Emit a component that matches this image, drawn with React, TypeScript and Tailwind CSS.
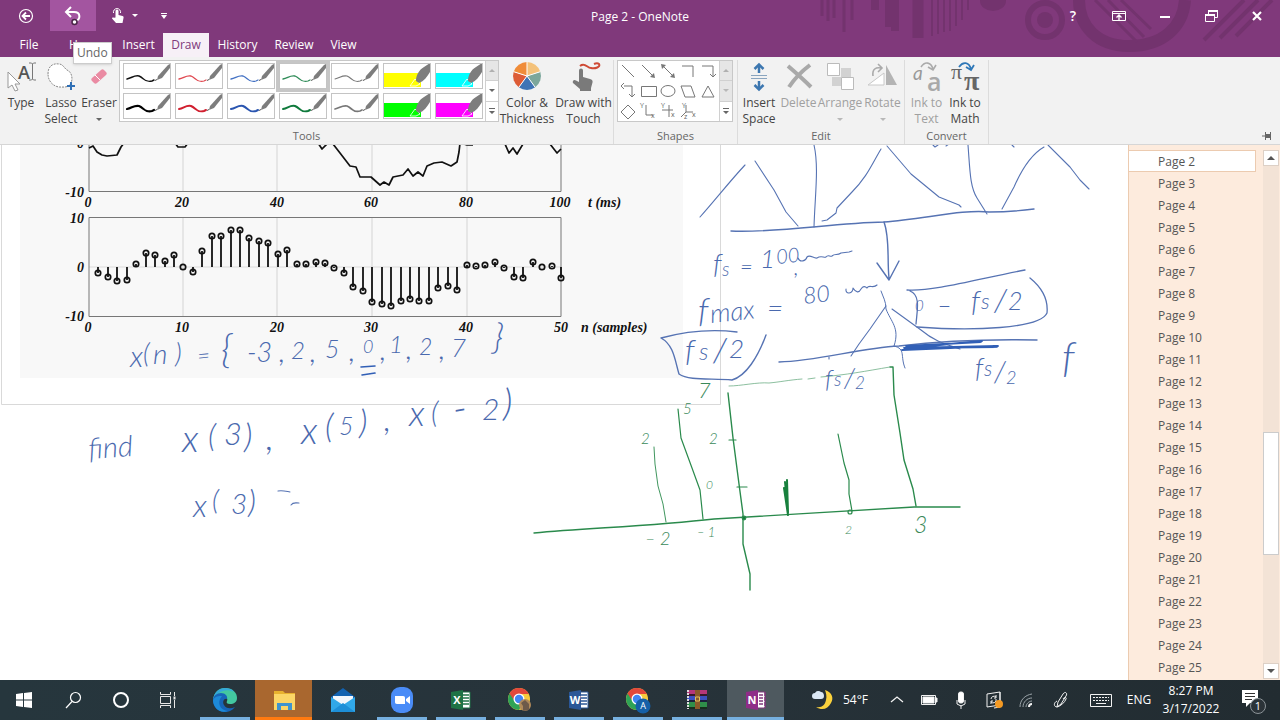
import { useState } from 'react'
import type { ReactNode } from 'react'

const TABS = [
  { name: 'File', width: 'w-[58px]' },
  { name: 'Home', width: 'w-14' },
  { name: 'Insert', width: 'w-[49px]' },
  { name: 'Draw', width: 'w-[46px]' },
  { name: 'History', width: 'w-[57px]' },
  { name: 'Review', width: 'w-14' },
  { name: 'View', width: 'w-[43px]' },
]

const PENS = [
  { color: '#111111', weight: 1.5 },
  { color: '#e0474f', weight: 1.3 },
  { color: '#4472c4', weight: 1.3 },
  { color: '#2e8b57', weight: 1.3 },
  { color: '#777777', weight: 1.1 },
  { color: '#ffff00', marker: true },
  { color: '#00ffff', marker: true },
  { color: '#000000', weight: 2.2 },
  { color: '#d11f2f', weight: 2 },
  { color: '#2a55b0', weight: 2 },
  { color: '#0f7a3c', weight: 2 },
  { color: '#777777', weight: 1.7 },
  { color: '#00ff00', marker: true },
  { color: '#ff00ff', marker: true },
]

const PAGES = Array.from({ length: 24 }, (_, i) => `Page ${i + 2}`)

// 采样点的纵坐标，n 从 1 开始
const SAMPLES = [
  273, 277, 281, 280, 264, 253, 255, 261, 255, 267, 272, 251, 236, 236, 230, 230, 238, 241, 243, 254, 250, 264, 264,
  262, 263, 268, 273, 287, 291, 302, 304, 306, 301, 299, 301, 301, 288, 286, 290, 265, 266, 265, 262, 268, 277, 278,
  262, 267, 266, 278,
]

interface InkText {
  t: string
  x: number
  y: number
  s: number
  r?: number
}

const BLUE_NOTES: InkText[] = [
  { t: 'x', x: 130, y: 367, s: 30 },
  { t: '(', x: 143, y: 363, s: 27 },
  { t: 'n', x: 153, y: 364, s: 28 },
  { t: ')', x: 175, y: 363, s: 27 },
  { t: '=', x: 198, y: 364, s: 22, r: -6 },
  { t: '{', x: 221, y: 363, s: 40 },
  { t: '-3', x: 247, y: 362, s: 27 },
  { t: ',', x: 279, y: 362, s: 30 },
  { t: '2', x: 291, y: 359, s: 24 },
  { t: ',', x: 310, y: 362, s: 30 },
  { t: '5', x: 325, y: 358, s: 25 },
  { t: ',', x: 349, y: 361, s: 30 },
  { t: '0', x: 363, y: 353, s: 18 },
  { t: ',', x: 380, y: 360, s: 30 },
  { t: '1', x: 389, y: 353, s: 24 },
  { t: ',', x: 406, y: 359, s: 30 },
  { t: '2', x: 419, y: 355, s: 23 },
  { t: ',', x: 439, y: 359, s: 30 },
  { t: '7', x: 451, y: 357, s: 26 },
  { t: '}', x: 492, y: 349, s: 36, r: 6 },
  { t: 'find', x: 89, y: 459, s: 29, r: -4 },
  { t: 'x', x: 182, y: 452, s: 38 },
  { t: '(', x: 208, y: 447, s: 32 },
  { t: '3', x: 224, y: 445, s: 31 },
  { t: ')', x: 244, y: 448, s: 34 },
  { t: ',', x: 266, y: 450, s: 38 },
  { t: 'x', x: 301, y: 444, s: 38 },
  { t: '(', x: 325, y: 438, s: 34 },
  { t: '5', x: 339, y: 435, s: 25 },
  { t: ')', x: 359, y: 434, s: 34 },
  { t: ',', x: 384, y: 431, s: 34 },
  { t: 'x', x: 409, y: 426, s: 36 },
  { t: '(', x: 431, y: 423, s: 30 },
  { t: '-', x: 455, y: 423, s: 40, r: -10 },
  { t: '2', x: 482, y: 420, s: 30 },
  { t: ')', x: 503, y: 416, s: 38 },
  { t: 'x', x: 193, y: 517, s: 32 },
  { t: '(', x: 212, y: 510, s: 28 },
  { t: '3', x: 231, y: 514, s: 28 },
  { t: ')', x: 248, y: 513, s: 32 },
  { t: 'f', x: 713, y: 274, s: 28 },
  { t: 's', x: 722, y: 276, s: 19 },
  { t: '=', x: 740, y: 274, s: 22 },
  { t: '1', x: 760, y: 268, s: 26 },
  { t: '00', x: 777, y: 264, s: 20, r: -6 },
  { t: ',', x: 794, y: 275, s: 22 },
  { t: 'f', x: 698, y: 322, s: 34 },
  { t: 'max', x: 711, y: 323, s: 26, r: -6 },
  { t: '=', x: 767, y: 318, s: 28 },
  { t: '80', x: 804, y: 304, s: 23, r: -6 },
  { t: 'f', x: 685, y: 362, s: 31 },
  { t: 's', x: 699, y: 360, s: 24 },
  { t: '/', x: 713, y: 362, s: 34 },
  { t: '2', x: 729, y: 358, s: 26 },
  { t: '0', x: 915, y: 311, s: 15 },
  { t: '–', x: 937, y: 314, s: 26 },
  { t: 'f', x: 971, y: 312, s: 29 },
  { t: 's', x: 981, y: 309, s: 22 },
  { t: '/', x: 994, y: 312, s: 32 },
  { t: '2', x: 1008, y: 310, s: 25 },
  { t: 'f', x: 825, y: 388, s: 25 },
  { t: 's', x: 834, y: 386, s: 19 },
  { t: '/', x: 844, y: 388, s: 27 },
  { t: '2', x: 855, y: 389, s: 17 },
  { t: 'f', x: 975, y: 378, s: 27 },
  { t: 's', x: 984, y: 376, s: 21 },
  { t: '/', x: 994, y: 382, s: 29 },
  { t: '2', x: 1006, y: 384, s: 18 },
  { t: 'f', x: 1062, y: 371, s: 41 },
]

const GREEN_NOTES: InkText[] = [
  { t: '7', x: 698, y: 398, s: 22 },
  { t: '5', x: 683, y: 414, s: 15 },
  { t: '2', x: 641, y: 444, s: 15 },
  { t: '2', x: 709, y: 444, s: 15 },
  { t: '0', x: 706, y: 489, s: 12 },
  { t: '– 2', x: 645, y: 545, s: 18 },
  { t: '– 1', x: 697, y: 537, s: 13 },
  { t: '2', x: 845, y: 534, s: 12 },
  { t: '3', x: 914, y: 533, s: 23 },
]

function Caret({ dim }: { dim?: boolean }) {
  return (
    <svg className="h-[3px] w-[6px]" viewBox="0 0 6 3">
      <path d="M0 0h6L3 3z" fill={dim ? '#b8b8b8' : '#666'} />
    </svg>
  )
}

interface BigButtonProps {
  width: string
  lines: string[]
  disabled?: boolean
  caret?: boolean
  children: ReactNode
}

function BigButton({ width, lines, disabled, caret, children }: BigButtonProps) {
  return (
    <button
      disabled={disabled}
      className={`${width} flex shrink-0 flex-col items-center whitespace-nowrap leading-4 ${disabled ? 'text-[#a0a0a0]' : 'text-[#444]'}`}
    >
      <svg className="mt-px mb-[2px] h-8 w-9 overflow-visible" viewBox="0 0 36 32" fill="none">
        {children}
      </svg>
      {lines.map(line => (
        <span key={line}>{line}</span>
      ))}
      {caret && (
        <span className="flex h-4 items-center">
          <Caret dim={disabled} />
        </span>
      )}
    </button>
  )
}

function Group({ name, children }: { name: string; children: ReactNode }) {
  return (
    <section className="flex shrink-0 flex-col border-r border-[#dcdcdc]">
      <div className="flex h-[68px]">{children}</div>
      <h2 className="text-center text-[11px] leading-4 text-[#666]">{name}</h2>
    </section>
  )
}

function GalleryScroll({ label, dim }: { label: string; dim?: boolean }) {
  return (
    <div className="flex w-[13px] flex-col divide-y divide-[#d0d0d0] border-l border-[#d0d0d0]">
      <button aria-label={`${label} up`} className="flex flex-1 items-center justify-center bg-[#e6e6e6]">
        <svg className="h-[3px] w-[6px]" viewBox="0 0 6 3">
          <path d="M3 0l3 3H0z" fill="#b0b0b0" />
        </svg>
      </button>
      <button aria-label={`${label} down`} className={`flex flex-1 items-center justify-center ${dim ? 'bg-[#e6e6e6]' : ''}`}>
        <Caret dim={dim} />
      </button>
      <button aria-label={`${label} more`} className="flex flex-1 items-center justify-center">
        <svg className="h-[6px] w-[6px]" viewBox="0 0 6 6">
          <path d="M0 0h6v1H0zM0 3h6L3 6z" fill="#666" />
        </svg>
      </button>
    </div>
  )
}

function PenCell({ color, weight, marker, selected, onClick, label }: {
  color: string
  weight?: number
  marker?: boolean
  selected: boolean
  onClick: () => void
  label: string
}) {
  return (
    <button
      aria-label={label}
      onClick={onClick}
      className={`h-[26px] w-12 border border-[#c4c4c4] bg-white ${selected ? 'outline-3 outline-[#c6c6c6]' : ''}`}
    >
      <svg className="h-6 w-[46px]" viewBox="0 0 46 24" fill="none">
        {marker ? (
          <>
            <path d="M0 9h37v14H0z" fill={color} />
            <path d="M26 22l5-7 5 5-4 2z" stroke="#fff" strokeOpacity="0.8" />
            <path d="M32 17c0-6 3-11 8-14l6-4v9c-3 5-6 9-11 11z" fill="#7d7d7d" />
          </>
        ) : (
          <>
            <path d="M3 15c5-1 7-4 12-3 5 2 6 7 13 5l2-1" stroke={color} strokeWidth={weight} strokeLinecap="round" />
            <path d="M33 16l1-4L44 1l2-1v4l-8 10z" fill="#7d7d7d" />
            <path d="M31 16.500l2-1" stroke="#555" />
          </>
        )}
      </svg>
    </button>
  )
}

function ShapeGrid() {
  return (
    <svg className="h-[60px] w-[101px] overflow-visible" viewBox="0 0 101 60" fill="none" stroke="#777">
      <path d="M4 4l12 12M24 4l12 12M44 4l12 12M64 5h11v11M84 5h11v11M6 25h8v11" />
      <path d="M37 17l-1-5-4 4zM43 3l1 5 4-4zM57 17l-1-5-4 4z" fill="#777" stroke="none" />
      <path d="M92 13l3 3 3-3M6 22l-3 3 3 3M11 33l3 3 3-3" />
      <path d="M23.500 25.500h15v10h-15z" />
      <ellipse cx="50" cy="30" rx="7" ry="5.500" />
      <path d="M63 25h10l4 11H67zM90 25l6 11H84zM10 44l7 7-7 7-7-7z" />
      <path d="M28 44v10h7M44 49h11M51 44v12M68 44v7h7M68 51l-5 5" />
      <g fill="#666" stroke="none" className="font-['Open_Sans',sans-serif] text-[7px]">
        <text x="22" y="47">Y</text>
        <text x="33" y="57">x</text>
        <text x="43" y="47">Y</text>
        <text x="53" y="56">x</text>
        <text x="64" y="47">Y</text>
        <text x="74" y="56">x</text>
        <text x="66" y="58">z</text>
      </g>
    </svg>
  )
}

function TitleArt() {
  return (
    <svg className="pointer-events-none absolute top-0 right-0 h-[57px] w-[480px]" viewBox="0 0 480 57" fill="none" stroke="#73336e">
      <path d="M22 0v16M28 0v21M34 0v18M44 0v32M52 0v20" strokeWidth="3" />
      <path d="M75 0v10M89 0v27M95 0v31" strokeWidth="8" />
      <path d="M118 0v38" strokeWidth="11" />
      <path d="M132 0v36M138 0v34M144 0v32M150 0v31M156 0v26M162 0v20M168 0v10" strokeWidth="2" />
      <ellipse cx="193" cy="1" rx="13" ry="10" fill="#73336e" stroke="none" />
      <circle cx="245" cy="20" r="17" strokeWidth="6" />
      <circle cx="245" cy="20" r="8" fill="#73336e" stroke="none" />
      <path d="M279 0c0 26 18 46 50 46 34 0 54-19 56-46" strokeWidth="12" />
      <path d="M295 0l42 42M308 0l36 37M321 0l30 29" strokeWidth="3" />
      <path d="M444 0l-40 40M458 0l-38 38M472 0l-36 36" strokeWidth="4" />
    </svg>
  )
}

function TitleBar() {
  return (
    <div className="relative grid h-[31px] grid-cols-[1fr_auto_1fr] items-center text-white">
      <div className="flex h-full items-center">
        <button aria-label="Back" className="flex h-full w-[50px] items-center justify-center pl-[2px]">
          <svg className="size-4" viewBox="0 0 16 16" fill="none" stroke="#fff" strokeWidth="1.200">
            <circle cx="8" cy="8" r="6.500" />
            <path d="M12 8H5M8 4.500L4.500 8 8 11.500" strokeWidth="1.800" />
          </svg>
        </button>
        <button aria-label="Undo" className="flex h-full w-[46px] items-center justify-center bg-[#a355a0]">
          <svg className="size-5" viewBox="0 0 20 20" fill="none">
            <path d="M3 6h8c7 0 7 8 1 9" stroke="#fff" strokeWidth="2" />
            <path d="M8 1L3 6l5 5" stroke="#fff" strokeWidth="2" />
            <circle cx="11.500" cy="16" r="2.500" fill="#fff" stroke="#4b2448" strokeWidth="1.500" />
          </svg>
        </button>
        <button aria-label="Touch mode" className="ml-3 flex h-full items-center gap-2 px-1">
          <svg className="h-4 w-3" viewBox="0 0 12 16">
            <path d="M3.500 9.500V3a1.500 1.500 0 013 0v4l4 1c1 .3 1.300 1 1 2l-1 5H4L0 10.500c0-1 1-1.500 2-.7z" fill="#fff" />
            <path d="M1.500 5a3.600 3.600 0 117 0" fill="none" stroke="#fff" />
          </svg>
          <svg className="h-[3px] w-[6px]" viewBox="0 0 6 3">
            <path d="M0 0h6L3 3z" fill="#fff" />
          </svg>
        </button>
        <button aria-label="Customize toolbar" className="ml-3 flex h-full w-5 items-center justify-center">
          <svg className="h-[6px] w-[6px]" viewBox="0 0 6 6">
            <path d="M0 0h6v1H0zM0 2h6L3 6z" fill="#fff" />
          </svg>
        </button>
      </div>
      <h1 className="pt-[3px] text-[12px]">Page 2 - OneNote</h1>
      <div className="flex h-full items-center justify-end">
        <button aria-label="Help" className="w-[46px] text-center text-[14px] font-semibold">?</button>
        <button aria-label="Ribbon display options" className="flex w-[46px] justify-center">
          <svg className="h-3 w-[14px]" viewBox="0 0 14 12" fill="none" stroke="#fff">
            <path d="M.5 1.500h13v9H.5zM.5 3.500h13" />
            <path d="M7 10V5M4.500 7.500L7 5l2.500 2.500" strokeWidth="1.300" />
          </svg>
        </button>
        <button aria-label="Minimize" className="flex w-[46px] justify-center">
          <span className="mt-[3px] h-[2px] w-[10px] bg-white" />
        </button>
        <button aria-label="Restore" className="flex w-[46px] justify-center">
          <svg className="h-3 w-[13px]" viewBox="0 0 13 12" fill="none" stroke="#fff">
            <path d="M.5 5.500h9v6h-9zM3.500 5V1.500h9v6H10" />
            <path d="M0 5h10M3 1h10" strokeWidth="2" />
          </svg>
        </button>
        <button aria-label="Close" className="flex w-[46px] justify-center">
          <svg className="size-[10px]" viewBox="0 0 10 10" stroke="#fff" strokeWidth="2.200">
            <path d="M1 1l8 8M9 1L1 9" />
          </svg>
        </button>
      </div>
    </div>
  )
}

function Ribbon() {
  const [pen, setPen] = useState(3)

  return (
    <div className="flex border-b border-[#d6d6d6] bg-[#f2f2f2] pt-[3px] text-[12px]">
      <Group name="Tools">
        <BigButton width="w-[42px]" lines={['Type']}>
          <text x="15" y="18" fill="#555" className="font-['Open_Sans',sans-serif] text-[18px] font-semibold">A</text>
          <path d="M26 2h2.500l1 1 1-1H33M29.500 3v15M26 19h2.500l1-1 1 1H33" stroke="#777" />
          <path d="M5 11v16l4-3 3 6 3-1-3-6h5z" fill="#fff" stroke="#999" />
        </BigButton>
        <BigButton width="w-[38px]" lines={['Lasso', 'Select']}>
          <path d="M5 13C5 5 10 2 16 3c4 0 5 4 8 6 5 2 6 9 4 13-2 5-8 4-12 4C9 25 5 19 5 13z" fill="#fff" stroke="#888" strokeDasharray="2 1" />
          <path d="M28 21v8M24 25h8" stroke="#2f6fb5" strokeWidth="2" />
        </BigButton>
        <BigButton width="w-[38px]" lines={['Eraser']} caret>
          <path d="M11 17L20 9c1-1 2-1 3 0l2 2c1 1 1 2 0 3l-9 8c-1 1-2 1-3 0l-2-2c-1-1-1-2 0-3z" fill="#ea8ba3" />
          <path d="M14 14l5 5" stroke="#fff" />
        </BigButton>
        <div className="ml-px flex h-[62px] border border-[#c8c8c8] bg-white">
          <div className="grid grid-cols-7 gap-x-1 gap-y-1 py-[2px] pr-[2px] pl-[3px]">
            {PENS.map((p, i) => (
              <PenCell key={i} {...p} label={`Pen ${i + 1}`} selected={pen === i} onClick={() => setPen(i)} />
            ))}
          </div>
          <GalleryScroll label="Pens" />
        </div>
        <BigButton width="w-14" lines={['Color &', 'Thickness']}>
          <path d="M18 15V1A14 14 0 0131.300 10.700z" fill="#f4c27a" />
          <path d="M18 15l13.300-4.300A14 14 0 0126.200 26.300z" fill="#7ca79b" />
          <path d="M18 15l8.200 11.300a14 14 0 01-16.400 0z" fill="#3f74b5" />
          <path d="M18 15L9.800 26.300A14 14 0 014.700 10.700z" fill="#dd5c36" />
          <path d="M18 15L4.700 10.700A14 14 0 0118 1z" fill="#f08c38" />
          <path d="M18 15V1M18 15l13.300-4.300M18 15l8.200 11.300M18 15L9.800 26.300M18 15L4.700 10.700" stroke="#fff" />
        </BigButton>
        <BigButton width="w-[57px]" lines={['Draw with', 'Touch']}>
          <path d="M14 5c5-4 7 2 11 2 4 1 10-1 8-4-1-1-3-1-5 0" stroke="#cf4a35" strokeWidth="2" />
          <path d="M13 21V9.500a2 2 0 014 0V16l7 2c2 .5 3 1.500 2.500 3.500L25 27v3H14v-2l-7-6c-1-2 1-4 3-2.500z" fill="#7a7a7a" />
        </BigButton>
        <div className="w-px" />
      </Group>

      <Group name="Shapes">
        <div className="mr-1 ml-[3px] flex h-[62px] border border-[#c8c8c8] bg-white">
          <ShapeGrid />
          <GalleryScroll label="Shapes" dim />
        </div>
      </Group>

      <Group name="Edit">
        <BigButton width="w-[42px]" lines={['Insert', 'Space']}>
          <path d="M10 14.500h16M10 17.500h16" stroke="#8aa5bf" />
          <path d="M18 12V4M18 20v8" stroke="#3d77b0" strokeWidth="2.500" />
          <path d="M13.500 8L18 3.500 22.500 8M13.500 24l4.500 4.500 4.500-4.500" stroke="#3d77b0" strokeWidth="2.500" />
        </BigButton>
        <BigButton width="w-[37px]" lines={['Delete']} disabled>
          <path d="M7 5c7 6 14 12 23 21M29 4C21 10 14 17 8 26" stroke="#a9a9a9" strokeWidth="4" />
        </BigButton>
        <BigButton width="w-[46px]" lines={['Arrange']} disabled caret>
          <path d="M19 7h10v9H19zM10 16h9v9h-9z" fill="#d2d2d2" />
          <path d="M5.500 2.500h12v12h-12zM19.500 16.500h12v12h-12z" fill="#fff" stroke="#bbb" />
        </BigButton>
        <BigButton width="w-[39px]" lines={['Rotate']} disabled caret>
          <path d="M19 12v12H3z" fill="#fff" stroke="#c8c8c8" />
          <path d="M21 4l11 20H21z" fill="#b4b4b4" />
          <path d="M8 15c-1-7 3-9 8-8M13 3l4 4-4 4" stroke="#aaa" strokeWidth="1.600" />
        </BigButton>
        <div className="w-[2px]" />
      </Group>

      <Group name="Convert">
        <BigButton width="w-[43px]" lines={['Ink to', 'Text']} disabled>
          <text x="4" y="19" fill="#999" className="font-['Lato',sans-serif] text-[19px] italic">a</text>
          <text x="18" y="30" fill="#a9a9a9" className="font-['Open_Sans',sans-serif] text-[25px] font-semibold">a</text>
          <path d="M12 6c4-6 10-5 12 2M19 6l5 3 3-5" stroke="#aaa" strokeWidth="1.600" />
        </BigButton>
        <BigButton width="w-[34px]" lines={['Ink to', 'Math']}>
          <text x="4" y="18" fill="#666" className="font-['Liberation_Serif',serif] text-[22px]">π</text>
          <text x="17" y="29" fill="#666" className="font-['Liberation_Serif',serif] text-[28px] font-bold">π</text>
          <path d="M12 6c4-6 10-5 12 2M19 6l5 3 3-5" stroke="#2f78b8" strokeWidth="1.800" />
        </BigButton>
        <div className="w-[6px]" />
      </Group>

      <button aria-label="Pin the ribbon" className="mt-auto mr-2 mb-1 ml-auto">
        <svg className="h-2 w-[10px]" viewBox="0 0 10 8" fill="#666">
          <path d="M0 3.500h3v1H0zM3 0h1v2h4V0h1v8H8V6H4v2H3z" />
          <path d="M4 3h4v2H4z" />
        </svg>
      </button>
    </div>
  )
}

function Plots() {
  const gridX = [183, 277, 372, 467]

  return (
    <g>
      <path d="M20 145h663v233H20z" fill="#f8f8f8" />
      <path d="M1.500 145v259.500H720.500V145" fill="none" stroke="#d9d9d9" />
      {gridX.map(x => (
        <path key={x} d={`M${x} 145V191M${x} 218V316`} stroke="#d4d4d4" />
      ))}
      <path d="M89 267H561" stroke="#dcdcdc" />
      <path d="M89 145V191.500H561V145M89 217.500H561V316.500H89z" fill="none" stroke="#777" />
      <g fill="none" stroke="#111" strokeWidth="1.700" strokeLinejoin="round">
        <path d="M89 148l4-2 4 6 5 3 5 1 10-1 4-8 3-4M175 143l3 4h7l3-4M318 143l4 6 5-5M333 144l7 9 10 13 6 1 4 10h11l9 8 4-3 5 3 4-8 10-2 5-6 5 7 5-4 5 4 4-10 7-3 8-1 9 4 6-4 2-10 1-9" />
        <path d="M464 144l3 1 6 0M505 144l4 9 4-5 4 6 6-10M550 144l7 9 4-4" />
      </g>
      {SAMPLES.map((y, i) => {
        const x = Math.round(89 + (i + 1) * 9.44)
        return (
          <g key={i} fill="none" stroke="#111">
            <path d={`M${x} 267V${y}`} strokeWidth="1.800" />
            <circle cx={x} cy={y} r="2.700" strokeWidth="1.700" />
          </g>
        )
      })}
      <g fill="#111" className="font-['Liberation_Serif',serif] text-[14px] font-bold italic" textAnchor="middle">
        {['0', '20', '40', '60', '80', '100'].map((n, i) => (
          <text key={n} x={[88, 182, 277, 371, 466, 560][i]} y="207">{n}</text>
        ))}
        {['0', '10', '20', '30', '40', '50'].map((n, i) => (
          <text key={n} x={[88, 182, 277, 371, 466, 561][i]} y="332">{n}</text>
        ))}
        <g textAnchor="end">
          <text x="84" y="148">0</text>
          <text x="84" y="197">-10</text>
          <text x="84" y="223">10</text>
          <text x="84" y="272">0</text>
          <text x="84" y="321">-10</text>
        </g>
        <g textAnchor="start">
          <text x="588" y="207">t (ms)</text>
          <text x="581" y="332">n (samples)</text>
        </g>
      </g>
    </g>
  )
}

function Notes({ items, color }: { items: InkText[]; color: string }) {
  return (
    <g fill={color} className="font-['Lato',sans-serif] font-light italic">
      {items.map(({ t, x, y, s, r }, i) => (
        <text key={i} x={x} y={y} fontSize={s} transform={r ? `rotate(${r} ${x} ${y})` : undefined}>
          {t}
        </text>
      ))}
    </g>
  )
}

function Canvas() {
  return (
    <main className="min-w-0 flex-1 overflow-hidden bg-white">
      <svg className="h-[535px] w-[1128px]" viewBox="0 145 1128 535">
        <Plots />

        {/* 蓝色墨迹 */}
        <g fill="none" stroke="#5673b3" strokeWidth="1.100" strokeLinecap="round" strokeLinejoin="round">
          <path d="M700 217c16-18 30-36 45-52M755 161l19 29 12 22 12 14M814 145c5 22 1 50 0 82" />
          <path d="M822 221l5-1 9-7 1-5 15-16c15-15 20-28 29-43M887 146l24 28 28 23 20 8 2 2" />
          <path d="M968 145c2 26 2 42 9 53l10 16M1002 209l12-22c7-16 16-32 30-40M1048 145l22 22 10 13 9 9" />
          <path d="M731 231c50 2 100-8 153-9 40-3 80-13 105-10 18 0 30-1 45-3" strokeWidth="1.400" />
          <path d="M884 222c6 16 3 38 5 56M877 263l12 17 10-19" strokeWidth="1.400" />
          <path d="M798 258c2 5 8 3 9-1 3-3 7 2 10 1 4-3 7 0 9-1 2-3 4 0 6-1 3-3 5 0 9-3l8-1 3-1" />
          <path d="M846 289c-1 6 7 5 7-1 3 5 6 5 8 1 2-3 4-3 6-1 2-4 6 1 10-3" />
          <path d="M881 291c2 6 5 10 5 18 5 13 14 19 8 37 12 3 6 10 11 22" strokeWidth="1" />
          <path d="M886 306l-16 23-11 15-8 12M892 309l29 21c14 12 28 15 39 19" />
          <path d="M779 362c40-1 80-14 120-16 50-6 90-7 138-6" strokeWidth="1.400" />
          <path d="M906 346l75-4M902 350l96-4-90 2 74-7-78 7 93-1" strokeWidth="1.800" stroke="#315fb6" />
          <path d="M907 290c25 2 75-12 118-20M910 291c11 4 7 20 6 33M1030 278c16 13 18 25 17 35-7 16-75 18-130 14" strokeWidth="1.300" />
          <path d="M737 332c-25-3-50-1-76 6 13 7 14 23 18 36 10 7 33 4 53 6 14-4 26-23 34-45" strokeWidth="1.400" />
          <path d="M361 367l14-1M362 375l13-2" strokeWidth="1.600" stroke="#315fb6" />
          <path d="M278 491c4-1 7 0 12 1M291 505c2-3 4-2 8-2M829 357v2" />
          <path d="M933 145l2 2 3-2M946 146l3-2M1012 145l2 2" />
        </g>

        {/* 绿色坐标图 */}
        <g fill="none" stroke="#2a8a4c" strokeWidth="1.200" strokeLinecap="round" strokeLinejoin="round">
          <path d="M534 533c55-5 118-7 180-14 60-4 160-9 200-12l46 0" strokeWidth="1.400" />
          <path d="M728 393l5 45 6 46 4 30 0 30 7 30 0 16" strokeWidth="1.400" />
          <path d="M729 440h7M737 487h10" />
          <path d="M654 447l1 17 3 22 5 18 3 18" strokeWidth="0.900" />
          <path d="M678 409l3 29 11 30 8 22 3 29" />
          <path d="M785 482l3 30-1-32 1 34-4-26 4 27-1-17" strokeWidth="2" stroke="#18803d" />
          <path d="M838 434l6 29 5 17 0 14 3 17" />
          <path d="M890 367l3 0 1 28 6 38 4 27 9 29 3 17" strokeWidth="1.400" />
          <circle cx="744" cy="518" r="1.800" fill="#18803d" />
          <circle cx="850" cy="512" r="2" />
          <path d="M729 386c12 0 28-4 40-3 11-1 20-3 33-4M808 379l7-1M821 377c25-2 45-6 69-10" strokeWidth="0.800" stroke="#6fae86" />
        </g>

        <Notes items={BLUE_NOTES} color="#4a69ae" />
        <Notes items={GREEN_NOTES} color="#3a8a5a" />
      </svg>
    </main>
  )
}

function PageList() {
  const [current, setCurrent] = useState('Page 2')

  return (
    <nav aria-label="Pages" className="w-[134px] shrink-0 overflow-hidden border-l border-[#eccbb0] bg-[#fdebdd] pt-[5px]">
      {PAGES.map(page => (
        <button
          key={page}
          onClick={() => setCurrent(page)}
          className={`block h-[22px] w-[127px] border text-left text-[12px] leading-[22px] text-[#555] ${
            page === current ? 'border-l-0 border-[#eccbb0] bg-white pl-[29px]' : 'border-transparent pl-7'
          }`}
        >
          {page}
        </button>
      ))}
    </nav>
  )
}

function ScrollBar() {
  return (
    <div className="flex w-[18px] shrink-0 flex-col items-stretch bg-[#fdebdd] px-px pt-[5px] pb-px">
      <button aria-label="Scroll up" className="flex h-4 items-center justify-center border border-[#ddd0c6] bg-white">
        <svg className="h-1 w-2" viewBox="0 0 8 4">
          <path d="M4 0l4 4H0z" fill="#555" />
        </svg>
      </button>
      <div className="flex flex-1 flex-col bg-[#f3e3d6]">
        <div className="flex-[267]" />
        <div className="flex-[122] border border-[#ccc] bg-white" />
        <div className="flex-[108]" />
      </div>
      <button aria-label="Scroll down" className="flex h-4 items-center justify-center border border-[#ddd0c6] bg-white">
        <svg className="h-1 w-2" viewBox="0 0 8 4">
          <path d="M0 0h8L4 4z" fill="#555" />
        </svg>
      </button>
    </div>
  )
}

function TaskButton({ label, open, active, children }: { label: string; open?: boolean; active?: string; children: ReactNode }) {
  return (
    <button aria-label={label} className={`flex w-[57px] flex-col items-center ${active ?? ''}`}>
      <svg className="mt-[6px] size-7" viewBox="0 0 28 28" fill="none">
        {children}
      </svg>
      {open && <span className={`mt-auto h-[3px] ${active ? 'w-full' : 'w-[50px]'} ${label === 'File Explorer' ? 'bg-[#ff7a10]' : 'bg-[#76b0e0]'}`} />}
    </button>
  )
}

function ChromeLogo() {
  return (
    <>
      <circle cx="13" cy="13" r="11" fill="#f7cb3d" />
      <path d="M3.500 7.500A11 11 0 0013 24l4.500-8L13 13z" fill="#2fa356" />
      <path d="M13 8h9.800A11 11 0 003.500 7.500L8.500 15z" fill="#e2483b" />
      <circle cx="13" cy="13" r="5.500" fill="#fff" />
      <circle cx="13" cy="13" r="4.200" fill="#4285f4" />
    </>
  )
}

function OfficeLogo({ letter, dark }: { letter: string; dark: string }) {
  return (
    <>
      <path d="M14 6h9v16h-9z" fill="#fff" stroke={dark} />
      <path d="M16 9h6M16 12h6M16 15h6M16 18h6" stroke={dark} strokeWidth="1.400" />
      <path d="M4 6l12-2v20L4 22z" fill={dark} />
      <text x="10" y="18" textAnchor="middle" fill="#fff" className="font-['Open_Sans',sans-serif] text-[11px] font-bold">
        {letter}
      </text>
    </>
  )
}

function TrayIcon({ label, width, children }: { label: string; width: string; children: ReactNode }) {
  return (
    <button aria-label={label} className={`${width} flex items-center justify-center`}>
      <svg className="h-5 w-6" viewBox="0 0 24 20" fill="none" stroke="#f2f2f2">
        {children}
      </svg>
    </button>
  )
}

function Taskbar() {
  return (
    <footer className="flex h-10 shrink-0 justify-between bg-linear-to-r from-[#26363d] via-[#27333a] to-[#222c31] text-[12px] text-white">
      <div className="flex">
        <button aria-label="Start" className="mr-[10px] flex w-10 items-center justify-center pl-2">
          <svg className="size-4" viewBox="0 0 16 16" fill="#fff">
            <path d="M0 2l7-1v6.500H0zM8 .9L16 0v7.500H8zM0 8.500h7V15l-7-1zM8 8.500h8V16l-8-1z" />
          </svg>
        </button>
        <button aria-label="Search" className="flex w-[47px] items-center justify-center">
          <svg className="size-[18px]" viewBox="0 0 18 18" fill="none" stroke="#fff" strokeWidth="1.200">
            <circle cx="10.500" cy="6.500" r="5" />
            <path d="M7 10.500L1 17" />
          </svg>
        </button>
        <button aria-label="Cortana" className="flex w-[47px] items-center justify-center">
          <svg className="size-[18px]" viewBox="0 0 18 18" fill="none" stroke="#fff" strokeWidth="2">
            <circle cx="9" cy="9" r="7" />
          </svg>
        </button>
        <button aria-label="Task view" className="mr-[5px] flex w-[47px] items-center justify-center">
          <svg className="size-[18px]" viewBox="0 0 18 18" fill="none" stroke="#e8e8e8">
            <path d="M1.500 5.500h10v7h-10zM1.500 1v2.500h10V1M1.500 17v-2.500h10V17M15.500 1v4M15.500 9v8" />
            <path d="M15.500 5.500v3" strokeWidth="2" />
          </svg>
        </button>
        <div className="flex gap-[2px]">
          <TaskButton label="Edge" open>
            <path d="M2 14C3 6 8 2 14 2c8 0 12 5 12 10 0 4-3 6-7 6-3 0-4-1-3-3 2-4-5-8-14-1z" fill="#43c8a0" />
            <path d="M2 14C3 6 8 2 14 2c4 0 7 1 9 4-8-4-16-1-21 8z" fill="#35a9d8" />
            <path d="M2 14c0-4 4-7 8-7s7 3 6 6c-3-1-5 3-3 6 2 4 7 4 11 2-3 4-7 5-10 5C7 26 2 21 2 14z" fill="#1765b8" />
            <path d="M9 13c-3 7 3 12 8 12-9 3-15-4-15-11 2-4 6-4 9-4z" fill="#1d8ad8" />
          </TaskButton>
          <TaskButton label="File Explorer" open active="bg-[#a9672f]">
            <path d="M4 5h9l2 2h10v17H4z" fill="#e8b22f" />
            <path d="M4 8h21v16H4z" fill="#fbd667" />
            <path d="M7 24v-7h15v7h-4v-4h-7v4z" fill="#3f94cf" />
          </TaskButton>
          <TaskButton label="Mail">
            <path d="M2 11L14 2l12 9v4H2z" fill="#1262b0" />
            <path d="M4 10h20v8H4z" fill="#f2f6fb" />
            <path d="M2 11l12 8 12-8v15H2z" fill="#31a8e8" />
            <path d="M2 26l12-9 12 9z" fill="#1d8fd8" />
          </TaskButton>
          <TaskButton label="Zoom" open>
            <rect x="3" y="1" width="22" height="26" rx="9" fill="#4a8cf7" />
            <path d="M7 10h8c1.500 0 2 .7 2 2v6H9c-1.400 0-2-.7-2-2zM18 13l4-3v8l-4-3z" fill="#fff" />
          </TaskButton>
          <TaskButton label="Excel" open>
            <OfficeLogo letter="X" dark="#1e7346" />
          </TaskButton>
          <TaskButton label="Chrome" open>
            <ChromeLogo />
            <circle cx="19" cy="19" r="6" fill="#b08a5a" />
            <path d="M17 25v-5l-2-3 4-3 4 4v6" fill="#6d5a4a" />
          </TaskButton>
          <TaskButton label="Word" open>
            <OfficeLogo letter="W" dark="#2b5797" />
          </TaskButton>
          <TaskButton label="Chrome profile" open>
            <ChromeLogo />
            <circle cx="19" cy="20" r="7.500" fill="#1560a8" />
            <text x="19" y="23" textAnchor="middle" fill="#fff" className="font-['Open_Sans',sans-serif] text-[9px]">A</text>
          </TaskButton>
          <TaskButton label="WinRAR" open>
            <path d="M4 4h20v6H4z" fill="#b5377a" />
            <path d="M4 10h20v6H4z" fill="#3c50c0" />
            <path d="M4 16h20v7H4z" fill="#2f8f4a" />
            <path d="M4 9h20M4 15h20M4 22h20" stroke="#111" strokeWidth="1.500" />
            <path d="M12 4h5v19h-5z" fill="#8a5a2a" />
            <path d="M12.500 11h4v4h-4z" stroke="#e0c060" />
            <path d="M5 4v19" stroke="#ddd" strokeDasharray="2 1" strokeWidth="2" />
          </TaskButton>
          <TaskButton label="OneNote" open active="bg-[#4e595f]">
            <path d="M14 6h9v16h-9z" fill="#fff" stroke="#80397b" />
            <path d="M17 9h4M17 12h4M17 15h4M17 18h4M23 6v16" stroke="#80397b" strokeWidth="1.400" strokeDasharray="4 1" />
            <path d="M4 6l12-2v20L4 22z" fill="#8f2d88" />
            <text x="10" y="18" textAnchor="middle" fill="#fff" className="font-['Open_Sans',sans-serif] text-[11px] font-bold">N</text>
          </TaskButton>
        </div>
      </div>

      <div className="flex">
        <button className="flex w-[74px] items-center gap-2 pl-[5px]">
          <svg className="h-[22px] w-6" viewBox="0 0 24 22">
            <path d="M14 1c7 2 9 8 6 13-3 6-9 8-15 4 6 1 9-2 10-7 1-4 0-7-1-10z" fill="#fbd23c" />
            <path d="M4 10a3 3 0 010-6 4 4 0 016-1c2 0 3 2 3 4s-1 3-3 3z" fill="#dbe8f5" />
          </svg>
          <span>54°F</span>
        </button>
        <TrayIcon label="Show hidden icons" width="w-[33px]">
          <path d="M6 12l6-5 6 5" strokeWidth="1.300" />
        </TrayIcon>
        <TrayIcon label="Battery" width="w-8">
          <path d="M4.500 5.500h14v9h-14z" />
          <path d="M6 7h11v6H6zM19 8h1v4h-1z" fill="#fff" />
        </TrayIcon>
        <TrayIcon label="Microphone" width="w-8">
          <rect x="9.500" y="2" width="5" height="11" rx="2" fill="#fff" />
          <path d="M8 10v4l4 2 4-2v-4M12 15v4" />
        </TrayIcon>
        <TrayIcon label="Updates" width="w-[33px]">
          <path d="M5 4l13-2v13L5 17zM18 2v15l-6 1" />
          <path d="M14 7a3 3 0 00-5 2M9 12a3 3 0 005-3M14 5v3h-2M9 14v-3h2" />
          <circle cx="17" cy="14" r="4" fill="#f59a23" stroke="none" />
        </TrayIcon>
        <TrayIcon label="Wi-Fi" width="w-8">
          <path d="M6 17C6 10 11 5 18 4M9 17c0-5 4-9 9-9M12 17c0-3 3-6 6-6" stroke="#9aa3a8" />
          <path d="M15 17c0-2 1-3 3-3" strokeWidth="2" />
        </TrayIcon>
        <TrayIcon label="Pen" width="w-[38px]">
          <path d="M9 12l5-8c2-3 5-1 3 2l-5 8-4 3zM8 11c-4 2-3 6 0 6 4-1 8-5 9-8 1-2-2-2-3 0" />
        </TrayIcon>
        <TrayIcon label="Touch keyboard" width="w-[42px]">
          <path d="M1.500 4.500h21v12h-21z" />
          <path d="M4 7.500h16M4 10.500h16" strokeDasharray="2 1" />
          <path d="M7 13.500h10" />
        </TrayIcon>
        <button className="w-[34px] text-center">ENG</button>
        <button className="flex w-[70px] flex-col items-center justify-center leading-[18px]">
          <span>8:27 PM</span>
          <span>3/17/2022</span>
        </button>
        <button aria-label="Notifications" className="flex w-[54px] items-center justify-center">
          <svg className="h-8 w-7" viewBox="0 0 28 32">
            <path d="M3 6h16v13H11l-4 4v-4H3z" fill="#fff" />
            <path d="M6 9.500h10M6 12.500h10M6 15.500h7" stroke="#333" />
            <circle cx="19" cy="22" r="7.500" fill="#2b3338" stroke="#8c9498" />
            <text x="19" y="26" textAnchor="middle" fill="#fff" className="font-['Open_Sans',sans-serif] text-[11px]">1</text>
          </svg>
        </button>
      </div>
    </footer>
  )
}

export default function App() {
  const [tab, setTab] = useState('Draw')

  return (
    <div className="flex h-screen flex-col overflow-hidden bg-white font-['Open_Sans','Noto_Sans',sans-serif]">
      <header className="relative bg-[#80397b]">
        <TitleArt />
        <TitleBar />
        <div className="flex h-[26px] items-end text-[12px]">
          {TABS.map(({ name, width }) => (
            <button
              key={name}
              onClick={() => setTab(name)}
              className={`${width} relative h-6 text-center ${tab === name ? 'bg-[#f7f0f7] text-[#80397b]' : 'text-white'}`}
            >
              {name}
            </button>
          ))}
        </div>
        <div role="tooltip" className="absolute top-[42px] left-[73px] z-10 border border-[#ccc] bg-white px-[3px] text-[12px] leading-5 text-[#666] shadow">
          Undo
        </div>
      </header>
      <Ribbon />
      <div className="flex min-h-0 flex-1">
        <Canvas />
        <PageList />
        <ScrollBar />
      </div>
      <Taskbar />
    </div>
  )
}
